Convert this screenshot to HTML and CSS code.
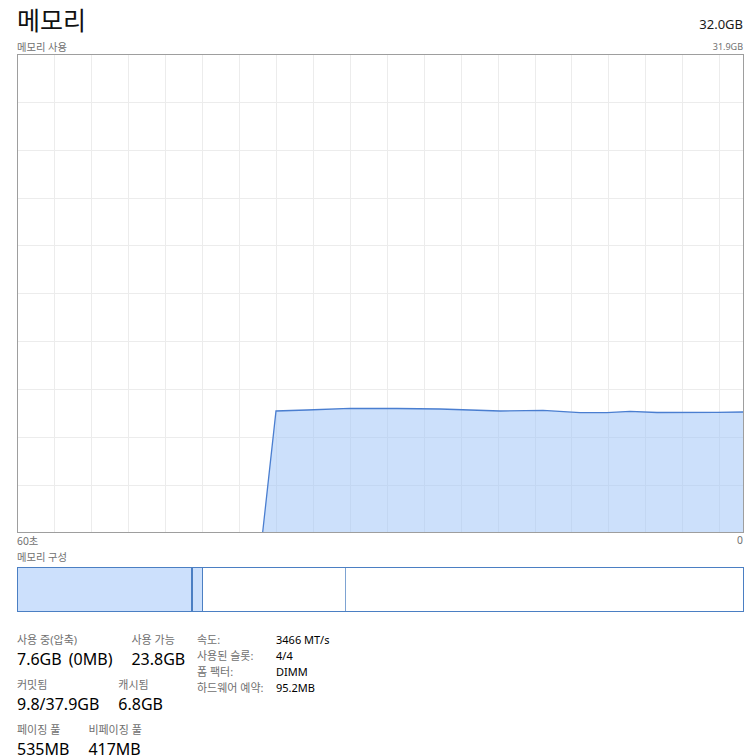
FILE: index.html
```html
<!DOCTYPE html>
<html lang="ko">
<head>
<meta charset="utf-8">
<title>메모리</title>
<link rel="stylesheet" href="styles.css">
</head>
<body>
<div class="page">
  <header class="head">
    <h1 class="title">메모리</h1>
    <span class="total">32.0GB</span>
  </header>
  <div class="sub">
    <span>메모리 사용</span>
    <span class="sub-num">31.9GB</span>
  </div>
  <div class="graph">
    <svg width="727" height="479" viewBox="0 0 727 479">
      <g class="grid">
        <line x1="37.5" y1="0" x2="37.5" y2="479"/>
        <line x1="74.5" y1="0" x2="74.5" y2="479"/>
        <line x1="111.5" y1="0" x2="111.5" y2="479"/>
        <line x1="148.5" y1="0" x2="148.5" y2="479"/>
        <line x1="185.5" y1="0" x2="185.5" y2="479"/>
        <line x1="222.5" y1="0" x2="222.5" y2="479"/>
        <line x1="259.5" y1="0" x2="259.5" y2="479"/>
        <line x1="296.5" y1="0" x2="296.5" y2="479"/>
        <line x1="333.5" y1="0" x2="333.5" y2="479"/>
        <line x1="370.5" y1="0" x2="370.5" y2="479"/>
        <line x1="407.5" y1="0" x2="407.5" y2="479"/>
        <line x1="444.5" y1="0" x2="444.5" y2="479"/>
        <line x1="481.5" y1="0" x2="481.5" y2="479"/>
        <line x1="518.5" y1="0" x2="518.5" y2="479"/>
        <line x1="554.5" y1="0" x2="554.5" y2="479"/>
        <line x1="591.5" y1="0" x2="591.5" y2="479"/>
        <line x1="628.5" y1="0" x2="628.5" y2="479"/>
        <line x1="665.5" y1="0" x2="665.5" y2="479"/>
        <line x1="702.5" y1="0" x2="702.5" y2="479"/>
        <line x1="0" y1="48.5" x2="727" y2="48.5"/>
        <line x1="0" y1="96.5" x2="727" y2="96.5"/>
        <line x1="0" y1="144.5" x2="727" y2="144.5"/>
        <line x1="0" y1="191.5" x2="727" y2="191.5"/>
        <line x1="0" y1="239.5" x2="727" y2="239.5"/>
        <line x1="0" y1="287.5" x2="727" y2="287.5"/>
        <line x1="0" y1="335.5" x2="727" y2="335.5"/>
        <line x1="0" y1="383.5" x2="727" y2="383.5"/>
        <line x1="0" y1="431.5" x2="727" y2="431.5"/>
      </g>
      <polygon class="area" points="245.7,478 259,357 290,356 333,354.3 380,354.5 423,355 483,357 526,356.3 563,358.7 590,358.7 613,357.3 640,358.5 700,358.3 726,358 726,478"/>
      <polyline class="curve" points="245.7,478 259,357 290,356 333,354.3 380,354.5 423,355 483,357 526,356.3 563,358.7 590,358.7 613,357.3 640,358.5 700,358.3 726,358"/>
      <rect class="frame" x="0.5" y="0.5" width="726" height="478"/>
    </svg>
  </div>
  <div class="axis">
    <span>60초</span>
    <span>0</span>
  </div>
  <div class="label">메모리 구성</div>
  <div class="comp">
    <div class="seg seg-used"></div>
    <div class="seg seg-mod"></div>
    <div class="seg seg-standby"></div>
    <div class="seg seg-free"></div>
  </div>
  <div class="stats">
    <div class="stats-left">
      <div class="stat-row">
        <div class="stat"><div class="stat-label">사용 중(압축)</div><div class="stat-value">7.6GB (0MB)</div></div>
        <div class="stat"><div class="stat-label">사용 가능</div><div class="stat-value">23.8GB</div></div>
      </div>
      <div class="stat-row">
        <div class="stat"><div class="stat-label">커밋됨</div><div class="stat-value">9.8/37.9GB</div></div>
        <div class="stat"><div class="stat-label">캐시됨</div><div class="stat-value">6.8GB</div></div>
      </div>
      <div class="stat-row">
        <div class="stat"><div class="stat-label">페이징 풀</div><div class="stat-value">535MB</div></div>
        <div class="stat"><div class="stat-label">비페이징 풀</div><div class="stat-value">417MB</div></div>
      </div>
    </div>
    <dl class="specs">
      <dt>속도:</dt><dd>3466 MT/s</dd>
      <dt>사용된 슬롯:</dt><dd>4/4</dd>
      <dt>폼 팩터:</dt><dd>DIMM</dd>
      <dt>하드웨어 예약:</dt><dd>95.2MB</dd>
    </dl>
  </div>
</div>
</body>
</html>
```
FILE: styles.css
```css
html, body {
  margin: 0;
  padding: 0;
  background: #ffffff;
}
body {
  font-family: "Noto Sans", "Noto Sans CJK KR", sans-serif;
  color: #000000;
  width: 750px;
  height: 756px;
  overflow: hidden;
}
.page {
  box-sizing: border-box;
  width: 750px;
  padding: 0 6px 0 17px;
}
.head {
  display: flex;
  justify-content: space-between;
  align-items: flex-end;
  height: 38px;
}
.title {
  margin: 0;
  font-weight: 400;
  font-size: 25px;
  line-height: 30px;
  padding-bottom: 4px;
  font-family: "Noto Sans CJK KR", sans-serif;
  color: #111111;
}
.total {
  font-size: 13px;
  line-height: 16px;
  padding-bottom: 6px;
  padding-right: 1px;
  color: #1a1a1a;
}
.sub {
  display: flex;
  justify-content: space-between;
  align-items: center;
  height: 16px;
  font-size: 10.3px;
  color: #707070;
}
.sub-num {
  font-size: 9px;
  padding-right: 1px;
}
.graph {
  height: 479px;
}
.graph svg { display: block; }
.grid line {
  stroke: #ececec;
  stroke-width: 1;
}
.area {
  fill: rgb(153, 194, 248);
  fill-opacity: 0.5;
}
.curve {
  fill: none;
  stroke: #4a7ed0;
  stroke-width: 1.3;
}
.frame {
  fill: none;
  stroke: #9e9e9e;
  stroke-width: 1;
}
.axis {
  display: flex;
  justify-content: space-between;
  align-items: center;
  height: 14px;
  font-size: 10.3px;
  color: #707070;
}
.axis span:last-child { padding-right: 1px; }
.label {
  height: 20px;
  line-height: 20px;
  font-size: 10.3px;
  color: #707070;
}
.comp {
  display: flex;
  box-sizing: border-box;
  width: 727px;
  height: 45px;
  border: 1px solid #4b7fc3;
}
.seg { height: 100%; box-sizing: border-box; }
.seg-used {
  width: 175px;
  background: #cce0fc;
  border-right: 2px solid #4b7fc3;
}
.seg-mod {
  width: 10px;
  background: #cce0fc;
  border-right: 1px solid #4b7fc3;
}
.seg-standby {
  width: 143px;
  border-right: 1px solid #7ea3d2;
}
.seg-free { flex: 1; }
.stats {
  display: flex;
  margin-top: 21px;
}
.stats-left {
  width: 180px;
  display: flex;
  flex-direction: column;
}
.stat-row {
  display: flex;
  gap: 19px;
  height: 45px;
}
.stat-label {
  font-size: 11px;
  line-height: 14px;
  color: #707070;
  white-space: nowrap;
}
.stat-value {
  font-size: 16px;
  line-height: 24px;
  word-spacing: 3px;
  color: #000000;
  white-space: nowrap;
}
.specs {
  margin: -1px 0 0 0;
  display: grid;
  grid-template-columns: 79px auto;
  grid-auto-rows: 16px;
  font-size: 11px;
  line-height: 15px;
  align-content: start;
}
.specs dt { color: #707070; white-space: nowrap; }
.specs dd { margin: 0; color: #000000; white-space: nowrap; }
```
